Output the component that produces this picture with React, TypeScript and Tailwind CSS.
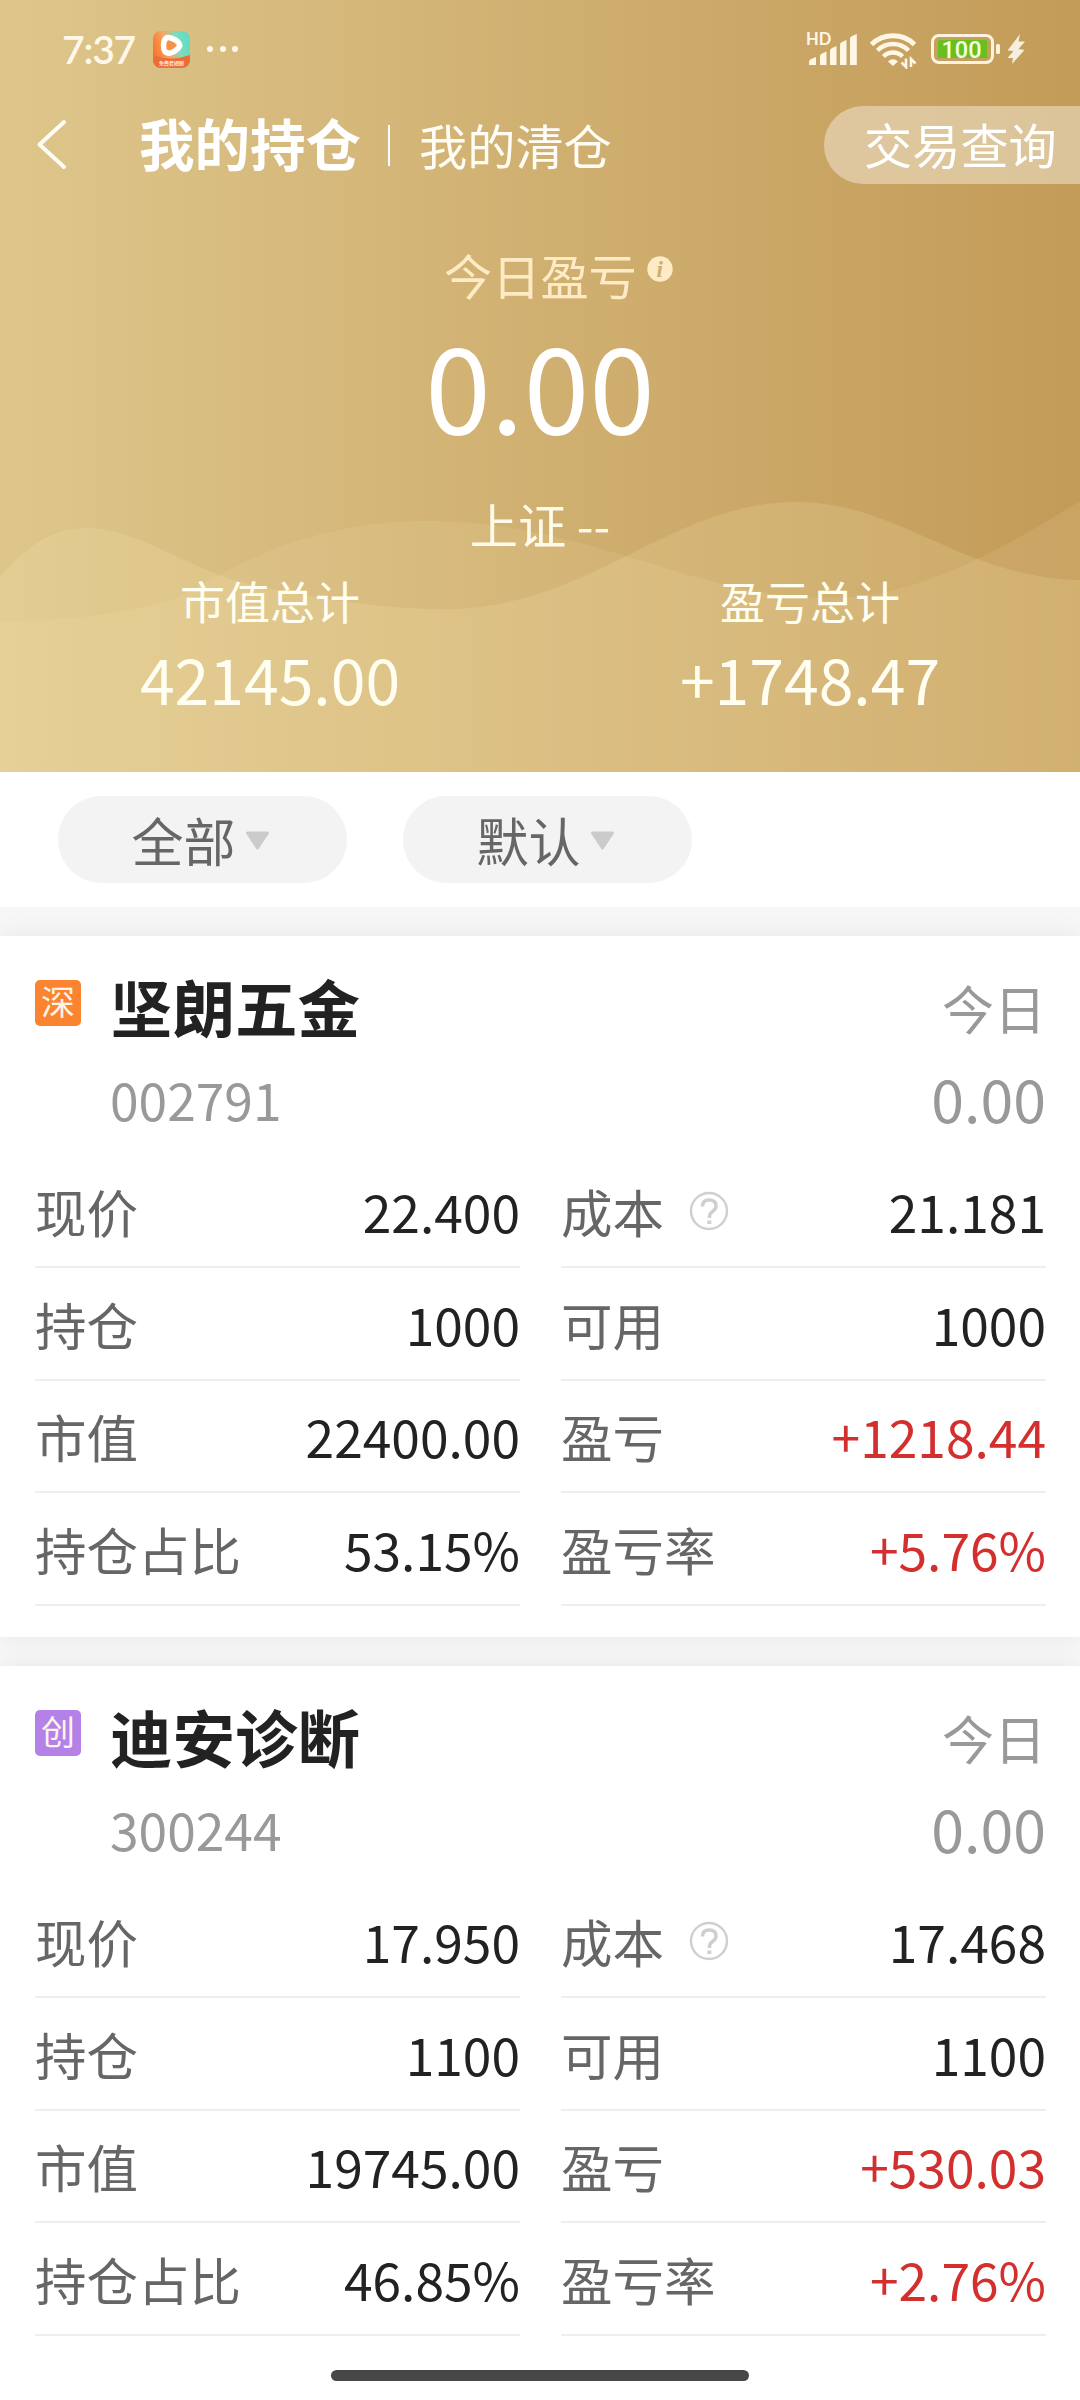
type Cell = { label: string; value: string; up?: boolean; help?: boolean };

type Holding = {
  market: string;
  marketClass: string;
  name: string;
  code: string;
  today: string;
  cells: Cell[];
};

const holdings: Holding[] = [
  {
    market: "深",
    marketClass: "bg-[#fb8430]",
    name: "坚朗五金",
    code: "002791",
    today: "0.00",
    cells: [
      { label: "现价", value: "22.400" },
      { label: "成本", value: "21.181", help: true },
      { label: "持仓", value: "1000" },
      { label: "可用", value: "1000" },
      { label: "市值", value: "22400.00" },
      { label: "盈亏", value: "+1218.44", up: true },
      { label: "持仓占比", value: "53.15%" },
      { label: "盈亏率", value: "+5.76%", up: true },
    ],
  },
  {
    market: "创",
    marketClass: "bg-[#b381e8]",
    name: "迪安诊断",
    code: "300244",
    today: "0.00",
    cells: [
      { label: "现价", value: "17.950" },
      { label: "成本", value: "17.468", help: true },
      { label: "持仓", value: "1100" },
      { label: "可用", value: "1100" },
      { label: "市值", value: "19745.00" },
      { label: "盈亏", value: "+530.03", up: true },
      { label: "持仓占比", value: "46.85%" },
      { label: "盈亏率", value: "+2.76%", up: true },
    ],
  },
];

function AppIcon() {
  return (
    <svg width="37" height="37" viewBox="0 0 37 37">
      <defs>
        <linearGradient id="app-bg" x1="0" y1="0.6" x2="1" y2="0.3">
          <stop offset="0" stopColor="#f9722a" />
          <stop offset="0.4" stopColor="#f5a860" />
          <stop offset="0.68" stopColor="#7fdcba" />
          <stop offset="1" stopColor="#5fdcc6" />
        </linearGradient>
        <clipPath id="app-clip">
          <rect width="37" height="37" rx="8" />
        </clipPath>
      </defs>
      <g clipPath="url(#app-clip)">
        <rect width="37" height="37" fill="url(#app-bg)" />
        <path d="M0 24 Q18 31 37 24 V37 H0 Z" fill="#ee6c3a" />
        <path
          d="M11 10.500 Q12.500 5.500 17.500 6.800 Q23 8.500 25.500 11.500 Q28 14.500 25 17.500 Q22 20.500 17.500 22 Q12.500 23 11 18.500 Q10 14.500 11 10.500 Z"
          fill="#f59448"
          stroke="#fff"
          strokeWidth="5.500"
          strokeLinejoin="round"
        />
        <text x="18.500" y="34" fontSize="5" fontWeight="700" textAnchor="middle" fill="#ffe9c9">
          免费看短剧
        </text>
      </g>
    </svg>
  );
}

function Signal() {
  return (
    <svg width="56" height="44" viewBox="802 27 56 44" fill="#fff6e6">
      <text x="806" y="45" fontSize="16.500" fontWeight="700" className="font-['Lato',sans-serif]">
        HD
      </text>
      <path d="M809 65 V62 Q809 60 811 59 L816 57 V65 Z" />
      <path d="M820 65 V56 Q820 54.500 822 53.500 L826.500 51.500 V65 Z" />
      <path d="M830 65 V50.500 Q830 49 832 48 L836.500 46 V65 Z" />
      <path d="M840 65 V44.500 Q840 43 842 42 L846.500 40 V65 Z" />
      <path d="M850 65 V38.500 Q850 37 852 36 L856.800 34 V65 Z" />
    </svg>
  );
}

function Wifi() {
  return (
    <svg width="48" height="38" viewBox="869 31 48 38" fill="none" stroke="#fff6e6">
      <path d="M871.500 44.500 A31 31 0 0 1 914.500 44.500" strokeWidth="5" />
      <path d="M877.500 50.500 A22 22 0 0 1 908.500 50.500" strokeWidth="4.500" />
      <path d="M883.500 56.500 A13.500 13.500 0 0 1 902.500 56.500" strokeWidth="4.500" />
      <path d="M888 61.500 Q893 57 898 61.500 L893 66 Z" fill="#fff6e6" stroke="none" />
      <path d="M906 58.500 V67 L901.500 62.500 M911 67 V59 L915.500 63.500" strokeWidth="2.600" />
    </svg>
  );
}

function Battery() {
  return (
    <svg width="96" height="38" viewBox="930 30 96 38">
      <rect x="932.500" y="35.500" width="60" height="27" rx="6.500" fill="none" stroke="#fff3df" strokeWidth="3" />
      <rect x="938" y="40" width="49" height="18" rx="1.500" fill="#67bf20" />
      <rect x="996" y="44" width="4" height="10" rx="1.500" fill="#fff3df" />
      <text
        x="961.500"
        y="58"
        fontSize="24.500"
        fontWeight="500"
        textAnchor="middle"
        textLength="40"
        lengthAdjust="spacingAndGlyphs"
        fill="#f4ffe4"
        className="font-['Roboto',sans-serif]"
      >
        100
      </text>
      <path
        d="M1020 34 L1007.500 50.500 L1013.500 51 L1007.500 58 L1013 58 L1012 64 L1024.500 50 L1018.500 49 L1025 41.500 L1018.500 41.500 Z"
        fill="#f6efdf"
      />
    </svg>
  );
}

function StatusBar() {
  return (
    <div className="flex h-[98px] items-center pl-[62px] pr-[54px]">
      <span className="w-[91px] whitespace-nowrap font-['Lato',sans-serif] text-[39px] font-semibold leading-none tracking-[-1.200px] text-[#fff8ea]">
        7:37
      </span>
      <AppIcon />
      <div className="ml-[17px] flex gap-[6.500px]">
        <i className="size-1.5 rounded-full bg-[#fff8ea]" />
        <i className="size-1.5 rounded-full bg-[#fff8ea]" />
        <i className="size-1.5 rounded-full bg-[#fff8ea]" />
      </div>
      <div className="ml-auto flex items-center">
        <Signal />
        <div className="ml-[11px] mt-[2px]">
          <Wifi />
        </div>
        <div className="ml-[13px]">
          <Battery />
        </div>
      </div>
    </div>
  );
}

function NavBar() {
  return (
    <div className="flex h-[94px] items-center pl-[36px]">
      <svg width="32" height="52" viewBox="0 0 32 52" fill="none" stroke="#fffdf5" strokeWidth="4">
        <path d="M28 3 L3.500 25.500 L28 48" strokeLinecap="round" strokeLinejoin="round" />
      </svg>
      <h1 className="ml-[71px] pb-[6px] text-[55.500px] font-bold leading-[70px] text-white">我的持仓</h1>
      <i className="ml-[27px] h-[41px] w-[2px] bg-white" />
      <span className="ml-[29px] pb-[3px] text-[48.200px] leading-[60px] text-[#fffdf5]">我的清仓</span>
      <button className="ml-auto h-[78px] w-[256px] rounded-l-[39px] bg-[#ecdfc6]/60 pb-[3px] pl-[40px] text-left text-[48.200px] text-white">
        交易查询
      </button>
    </div>
  );
}

function Waves() {
  return (
    <svg className="absolute inset-x-0 bottom-0" width="1080" height="272" viewBox="0 500 1080 272">
      <path
        d="M0 577 C30 541 58 528 86 528 C135 528 180 564 240 582 C310 598 380 609 445 609 C590 609 670 502 795 502 C900 502 960 577 1080 580 V772 H0 Z"
        fill="#fff0b8"
        fillOpacity="0.160"
      />
      <path
        d="M0 622 C80 620 135 612 180 597 C235 565 310 521 425 521 C590 521 690 598 830 598 C920 598 1000 550 1080 501 V772 H0 Z"
        fill="#fff0c0"
        fillOpacity="0.110"
      />
    </svg>
  );
}

function Total({ label, value }: { label: string; value: string }) {
  return (
    <div className="flex flex-1 flex-col items-center text-[#fffef0]">
      <span className="text-[45px] leading-[50px]">{label}</span>
      <span className="mt-[17px] text-[62.500px] leading-[70px]">{value}</span>
    </div>
  );
}

function Header() {
  return (
    <header className="relative h-[772px] bg-linear-to-r from-[#dec68b] via-[#d0b071] to-[#c39b58]">
      <Waves />
      <div className="relative">
        <StatusBar />
        <NavBar />
        <div className="mt-[52px] flex h-[60px] pl-[444px]">
          <span className="text-[48.200px] leading-[60px] text-[#feebc6]">今日盈亏</span>
          <svg className="ml-[10px] mt-[12px]" width="26" height="26" viewBox="0 0 26 26">
            <circle cx="13" cy="13" r="12.700" fill="#feebc6" />
            <text
              x="12.800"
              y="20.500"
              fontSize="23"
              fontStyle="italic"
              fontWeight="700"
              textAnchor="middle"
              fill="#cdae70"
              className="font-['Liberation_Serif',serif]"
            >
              i
            </text>
          </svg>
        </div>
        <div className="mt-[19px] text-center text-[118px] leading-[120px] text-white">0.00</div>
        <div className="mt-[50px] text-center text-[48.200px] leading-[60px] text-[#fffaea]">上证 --</div>
        <div className="mt-[23px] flex">
          <Total label="市值总计" value="42145.00" />
          <Total label="盈亏总计" value="+1748.47" />
        </div>
      </div>
    </header>
  );
}

function Filter({ label }: { label: string }) {
  return (
    <button className="flex h-[87px] w-[289px] items-center justify-center gap-[9px] rounded-full bg-[#f3f3f3] pr-[4px] pt-[1px] text-[52px] leading-[60px] text-[#666]">
      {label}
      <svg width="25" height="19" viewBox="0 0 25 19" fill="#cbcbcb" stroke="#cbcbcb" strokeWidth="3" strokeLinejoin="round">
        <path d="M2.500 2 H22.500 L12.500 17 Z" />
      </svg>
    </button>
  );
}

function HelpIcon() {
  return (
    <svg className="ml-[25px] mt-[2px]" width="40" height="40" viewBox="0 0 40 40" fill="none" stroke="#cfcfcf">
      <circle cx="20" cy="20" r="18" strokeWidth="2.400" />
      <path d="M13.500 15.500 Q13.500 9 20 9 Q27 9 27 15 Q27 18.500 23.500 20.500 Q20.300 22.500 20.300 27" strokeWidth="3.400" />
      <path d="M20.300 29.500 V33" strokeWidth="4" />
    </svg>
  );
}

function HoldingCard({ holding }: { holding: Holding }) {
  return (
    <section className="h-[701px] bg-white pl-[35px] pr-[34px] shadow-[0_0_26px_rgba(0,0,0,0.070)]">
      <div className="flex h-[219px] pt-[34px]">
        <span
          className={`mt-[10px] flex size-[46px] items-center justify-center rounded-[5px] pb-[4px] text-[34px] leading-none text-[#fff4e8] ${holding.marketClass}`}
        >
          {holding.market}
        </span>
        <div className="ml-[29px] flex flex-1 flex-col">
          <h2 className="pt-[2px] text-[62.500px] font-bold leading-[68px] text-[#222]">{holding.name}</h2>
          <span className="mt-[29px] text-[51.500px] leading-[60px] text-[#999]">{holding.code}</span>
        </div>
        <div className="flex flex-col items-end text-[#999]">
          <span className="pt-[4px] text-[52px] leading-[68px]">今日</span>
          <span className="mt-[26px] text-[59px] leading-[60px]">{holding.today}</span>
        </div>
      </div>
      <div className="grid h-[451px] grid-cols-2 grid-rows-4 gap-x-[41px]">
        {holding.cells.map((cell) => (
          <div key={cell.label} className="flex items-center border-b-2 border-[#eee] text-[51.500px] leading-[60px]">
            <span className="pt-px text-[#666]">{cell.label}</span>
            {cell.help && <HelpIcon />}
            <span className={cell.up ? "ml-auto pt-px text-[#d32f2f]" : "ml-auto pt-px text-[#222]"}>{cell.value}</span>
          </div>
        ))}
      </div>
    </section>
  );
}

export default function App() {
  return (
    <div className="relative h-[2400px] w-[1080px] overflow-hidden bg-[#f7f7f7] font-['Noto_Sans_CJK_SC',sans-serif]">
      <Header />
      <div className="relative z-10 flex h-[135px] gap-[56px] bg-white pl-[58px] pt-[24px]">
        <Filter label="全部" />
        <Filter label="默认" />
      </div>
      <main className="flex flex-col gap-[29px] pt-[29px]">
        {holdings.map((holding) => (
          <HoldingCard key={holding.code} holding={holding} />
        ))}
      </main>
      <div className="relative h-[33px] bg-white" />
      <div className="absolute bottom-[19px] left-[331px] h-[11px] w-[418px] rounded-full bg-[#474747]" />
    </div>
  );
}
